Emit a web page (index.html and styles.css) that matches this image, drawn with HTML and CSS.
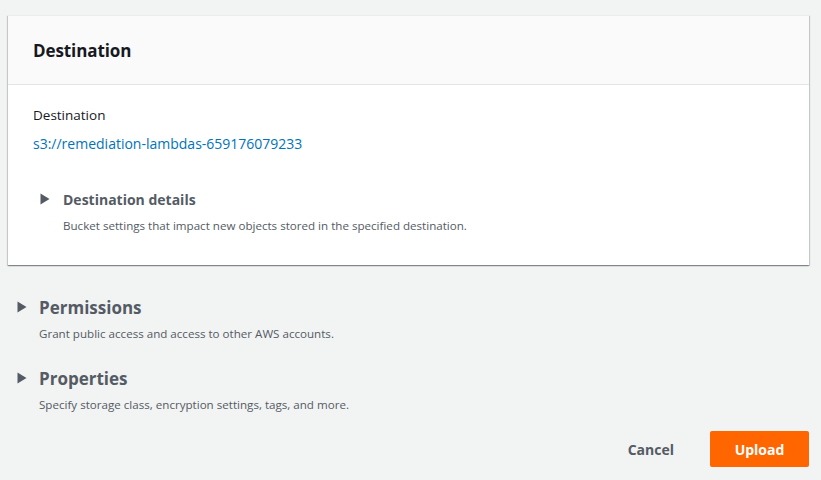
FILE: index.html
```html
<!DOCTYPE html>
<html>
<head>
<meta charset="utf-8">
<link rel="stylesheet" href="styles.css">
</head>
<body>
<div class="page">
  <section class="card">
    <header class="card-header"><h2>Destination</h2></header>
    <div class="card-body">
      <div class="label">Destination</div>
      <a class="link" href="#">s3://remediation-lambdas-659176079233</a>
      <div class="expander inner">
        <div class="exp-head">
          <svg class="caret" width="10" height="12" viewBox="0 0 10 12"><path d="M0.5 0.5 L9.5 6 L0.5 11.5 Z" fill="#545b64"/></svg>
          <span class="exp-title small">Destination details</span>
        </div>
        <div class="exp-desc">Bucket settings that impact new objects stored in the specified destination.</div>
      </div>
    </div>
  </section>

  <div class="expander outer first">
    <div class="exp-head">
      <svg class="caret" width="10" height="12" viewBox="0 0 10 12"><path d="M0.5 0.5 L9.5 6 L0.5 11.5 Z" fill="#545b64"/></svg>
      <span class="exp-title">Permissions</span>
    </div>
    <div class="exp-desc">Grant public access and access to other AWS accounts.</div>
  </div>

  <div class="expander outer second">
    <div class="exp-head">
      <svg class="caret" width="10" height="12" viewBox="0 0 10 12"><path d="M0.5 0.5 L9.5 6 L0.5 11.5 Z" fill="#545b64"/></svg>
      <span class="exp-title">Properties</span>
    </div>
    <div class="exp-desc">Specify storage class, encryption settings, tags, and more.</div>
  </div>

  <div class="actions">
    <button class="btn-link">Cancel</button>
    <button class="btn-primary">Upload</button>
  </div>
</div>
</body>
</html>
```
FILE: styles.css
```css
html, body {
  margin: 0;
  padding: 0;
  background: #f2f3f3;
  font-family: "Open Sans", "Noto Sans", Arial, sans-serif;
  color: #16191f;
}
.page {
  padding: 15px 12px 0 8px;
}
.card {
  background: #fff;
  box-shadow: 0 1px 1px 0 rgba(0,28,36,0.3), 1px 1px 1px 0 rgba(0,28,36,0.15), -1px 1px 1px 0 rgba(0,28,36,0.15);
  border-top: 1px solid #eaeded;
}
.card-header {
  background: #fafafa;
  border-bottom: 1px solid #e4e6e6;
  height: 68px;
  display: flex;
  align-items: center;
  padding: 0 25px;
}
.card-header h2 {
  margin: 0;
  font-size: 17px;
  font-weight: 700;
  color: #16191f;
  letter-spacing: -0.1px;
}
.card-body {
  padding: 20px 25px 32px;
}
.label {
  font-size: 13.5px;
  line-height: 20px;
  color: #16191f;
}
.link {
  display: block;
  margin-top: 9px;
  font-size: 14px;
  line-height: 20px;
  color: #0073bb;
  text-decoration: none;
}
.expander.inner {
  margin-top: 35px;
  padding-left: 7px;
}
.exp-head {
  display: flex;
  align-items: center;
  height: 20px;
}
.caret {
  margin-right: 13px;
  flex: none;
}
.exp-title {
  font-size: 17px;
  font-weight: 700;
  color: #545b64;
}
.exp-title.small {
  font-size: 14px;
}
.exp-desc {
  font-size: 11.6px;
  line-height: 14px;
  color: #545b64;
  padding-left: 22px;
  margin-top: 10px;
}
.inner .exp-desc {
  margin-top: 10px;
  padding-left: 23px;
}
.expander.outer {
  margin-left: 9px;
}
.expander.outer .caret {
  margin-right: 12px;
}
.expander.outer.first {
  margin-top: 32px;
}
.expander.outer.second {
  margin-top: 27px;
}
.actions {
  display: flex;
  justify-content: flex-end;
  align-items: center;
  margin-top: 19px;
}
.btn-link, .btn-primary {
  font-family: inherit;
  font-size: 14px;
  font-weight: 700;
  border: none;
  cursor: pointer;
}
.btn-link {
  background: transparent;
  color: #545b64;
  padding: 0 36px 0 20px;
  height: 35px;
}
.btn-primary {
  background: #ff6600;
  color: #fff;
  width: 99px;
  height: 36px;
  border-radius: 2px;
}
```
